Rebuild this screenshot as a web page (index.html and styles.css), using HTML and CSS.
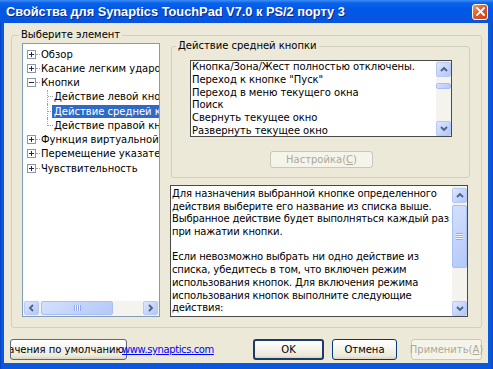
FILE: index.html
```html
<!DOCTYPE html>
<html lang="ru">
<head>
<meta charset="utf-8">
<link rel="stylesheet" href="styles.css">
</head>
<body>
<div class="window">
  <div class="titlebar">
    <span class="title">Свойства для Synaptics TouchPad V7.0 к PS/2 порту 3</span>
    <div class="close">
      <svg width="9" height="9" viewBox="0 0 9 9"><path d="M1 1L8 8M8 1L1 8" stroke="#fff" stroke-width="1.8" stroke-linecap="square"/></svg>
    </div>
  </div>
  <div class="body">
    <div class="group outer">
      <div class="legend">Выберите элемент</div>
      <div class="outer-content">
        <div class="tree">
          <div class="tree-items">
            <div class="row root"><svg class="exp" width="9" height="9" viewBox="0 0 9 9"><rect x=".5" y=".5" width="8" height="8" fill="#fff" stroke="#8c97a5"/><path d="M2 4.5h5M4.5 2v5" stroke="#1b2a4a"/></svg><span class="stub"></span><span class="label">Обзор</span></div>
            <div class="row root"><svg class="exp" width="9" height="9" viewBox="0 0 9 9"><rect x=".5" y=".5" width="8" height="8" fill="#fff" stroke="#8c97a5"/><path d="M2 4.5h5M4.5 2v5" stroke="#1b2a4a"/></svg><span class="stub"></span><span class="label">Касание легким ударом</span></div>
            <div class="row root"><svg class="exp" width="9" height="9" viewBox="0 0 9 9"><rect x=".5" y=".5" width="8" height="8" fill="#fff" stroke="#8c97a5"/><path d="M2 4.5h5" stroke="#1b2a4a"/></svg><span class="stub"></span><span class="label">Кнопки</span></div>
            <div class="row child"><span class="branch"></span><span class="label">Действие левой кнопки</span></div>
            <div class="row child"><span class="branch"></span><span class="label selected">Действие средней кнопки</span></div>
            <div class="row child"><span class="branch last"></span><span class="label">Действие правой кнопки</span></div>
            <div class="row root"><svg class="exp" width="9" height="9" viewBox="0 0 9 9"><rect x=".5" y=".5" width="8" height="8" fill="#fff" stroke="#8c97a5"/><path d="M2 4.5h5M4.5 2v5" stroke="#1b2a4a"/></svg><span class="stub"></span><span class="label">Функция виртуальной прокрутки</span></div>
            <div class="row root"><svg class="exp" width="9" height="9" viewBox="0 0 9 9"><rect x=".5" y=".5" width="8" height="8" fill="#fff" stroke="#8c97a5"/><path d="M2 4.5h5M4.5 2v5" stroke="#1b2a4a"/></svg><span class="stub"></span><span class="label">Перемещение указателя</span></div>
            <div class="row root"><svg class="exp" width="9" height="9" viewBox="0 0 9 9"><rect x=".5" y=".5" width="8" height="8" fill="#fff" stroke="#8c97a5"/><path d="M2 4.5h5M4.5 2v5" stroke="#1b2a4a"/></svg><span class="stub"></span><span class="label">Чувствительность</span></div>
          </div>
          <div class="hscroll">
            <div class="sb-btn h"><svg width="7" height="8" viewBox="0 0 7 8"><path d="M5 1L2 4L5 7" fill="none" stroke="#4d6185" stroke-width="1.8"/></svg></div>
            <div class="sb-thumb h"><span class="grip-h"></span></div>
            <div class="sb-track"></div>
            <div class="sb-btn h"><svg width="7" height="8" viewBox="0 0 7 8"><path d="M2 1L5 4L2 7" fill="none" stroke="#4d6185" stroke-width="1.8"/></svg></div>
          </div>
        </div>
        <div class="right">
          <div class="group inner">
            <div class="legend">Действие средней кнопки</div>
            <div class="listbox">
              <div class="list-items">
                <div class="item">Кнопка/Зона/Жест полностью отключены.</div>
                <div class="item">Переход к кнопке "Пуск"</div>
                <div class="item">Переход в меню текущего окна</div>
                <div class="item">Поиск</div>
                <div class="item">Свернуть текущее окно</div>
                <div class="item">Развернуть текущее окно</div>
              </div>
              <div class="vscroll list-sb">
                <div class="sb-btn v"><svg width="8" height="7" viewBox="0 0 8 7"><path d="M1 5L4 2L7 5" fill="none" stroke="#4d6185" stroke-width="1.8"/></svg></div>
                <div class="gap6"></div>
                <div class="sb-thumb v small"></div>
                <div class="sb-track"></div>
                <div class="sb-btn v"><svg width="8" height="7" viewBox="0 0 8 7"><path d="M1 2L4 5L7 2" fill="none" stroke="#4d6185" stroke-width="1.8"/></svg></div>
              </div>
            </div>
            <div class="btn disabled setup">Настройка(<u>С</u>)</div>
          </div>
          <div class="textbox">
            <div class="text">
              <div>Для назначения выбранной кнопке определенного</div>
              <div>действия выберите его название из списка выше.</div>
              <div>Выбранное действие будет выполняться каждый раз</div>
              <div>при нажатии кнопки.</div>
              <div>&nbsp;</div>
              <div>Если невозможно выбрать ни одно действие из</div>
              <div>списка, убедитесь в том, что включен режим</div>
              <div>использования кнопок. Для включения режима</div>
              <div>использования кнопок выполните следующие</div>
              <div>действия:</div>
            </div>
            <div class="vscroll text-sb">
              <div class="sb-btn v"><svg width="8" height="7" viewBox="0 0 8 7"><path d="M1 5L4 2L7 5" fill="none" stroke="#4d6185" stroke-width="1.8"/></svg></div>
              <div class="sb-thumb v big"><span class="grip-v"></span></div>
              <div class="sb-track"></div>
              <div class="sb-btn v"><svg width="8" height="7" viewBox="0 0 8 7"><path d="M1 2L4 5L7 2" fill="none" stroke="#4d6185" stroke-width="1.8"/></svg></div>
            </div>
          </div>
        </div>
      </div>
    </div>
    <div class="bottom">
      <div class="btn defaults"><span>Значения по умолчанию</span></div>
      <span class="link">www.synaptics.com</span>
      <div class="btn ok">OK</div>
      <div class="btn cancel">Отмена</div>
      <div class="btn disabled apply">Применить(<u>А</u>)</div>
    </div>
  </div>
</div>
</body>
</html>
```
FILE: styles.css
```css
* { box-sizing: border-box; }
html, body { margin: 0; padding: 0; }
body {
  width: 493px;
  height: 369px;
  overflow: hidden;
  font-family: "DejaVu Sans", sans-serif;
  font-size: 10px;
  color: #000;
  background: #0a55dc;
}
.window {
  width: 493px;
  height: 369px;
  display: flex;
  flex-direction: column;
  background: linear-gradient(90deg, #0842c4 0, #0a58e0 2px, #0a58e0 491px, #0842c4 493px);
}
.titlebar {
  height: 23px;
  flex: none;
  display: flex;
  align-items: center;
  padding: 0 5px 0 6px;
  background: linear-gradient(#3d8ef7 0, #0a62ea 3px, #0058e6 9px, #0556e2 17px, #0a55da 23px);
}
.title {
  flex: 1;
  color: #fff;
  font-family: "Liberation Sans", sans-serif;
  font-weight: bold;
  font-size: 12.8px;
  white-space: nowrap;
  text-shadow: 1px 1px 0 #0a2a8a;
}
.close {
  width: 16px;
  height: 16px;
  border: 1px solid #fff;
  border-radius: 3px;
  background: linear-gradient(135deg, #f09a72 0, #e25a2a 45%, #c8401a 100%);
  display: flex;
  align-items: center;
  justify-content: center;
}
.body {
  flex: 1;
  margin: 0 5px 6px 4px;
  background: #ece9d8;
  display: flex;
  flex-direction: column;
}
.group {
  border: 1px solid #d0d0bf;
  border-radius: 3px;
}
.legend {
  width: fit-content;
  line-height: 12px;
  height: 12px;
  padding: 0 2px;
  background: #ece9d8;
  white-space: nowrap;
  margin-top: -7px;
}
.outer {
  margin: 12px 6px 0 7px;
  padding: 0 11px 10px 10px;
}
.outer > .legend { margin-left: -3px; }
.outer-content {
  display: flex;
  gap: 10px;
  margin-top: 2px;
}
.tree {
  width: 138px;
  height: 274px;
  border: 1px solid #7f9db9;
  background: #fff;
  display: flex;
  flex-direction: column;
}
.tree-items {
  flex: 1;
  overflow: hidden;
  padding-top: 3px;
}
.row {
  height: 14.25px;
  display: flex;
  align-items: center;
  white-space: nowrap;
}
.exp { margin-left: 4px; flex: none; }
.stub {
  width: 4px;
  border-top: 1px dotted #a0a0a0;
  flex: none;
}
.root .label { margin-left: 1px; }
.branch {
  align-self: stretch;
  width: 6px;
  margin-left: 24px;
  border-left: 1px dotted #a0a0a0;
  display: flex;
  align-items: center;
  flex: none;
}
.branch::after {
  content: "";
  width: 5px;
  border-top: 1px dotted #a0a0a0;
}
.branch.last {
  align-self: flex-start;
  height: 8px;
  align-items: flex-end;
}
.child .label { margin-left: 1px; }
.child .label.selected {
  margin-left: -1px;
  padding: 0 2px;
  background: #316ac5;
  color: #fff;
  line-height: 13px;
}
.hscroll {
  height: 15px;
  flex: none;
  display: flex;
  padding: 0 1px 1px 1px;
  background: #f4f3ee;
}
.sb-btn {
  flex: none;
  border: 1px solid #b7c9f4;
  border-radius: 2px;
  background: linear-gradient(135deg, #dde8fe 0, #c6d6fb 50%, #b4c8f6 100%);
  display: flex;
  align-items: center;
  justify-content: center;
}
.sb-btn.h { width: 15px; height: 14px; }
.sb-btn.v { width: 15px; height: 15px; }
.sb-track { flex: 1; background: #f4f3ee; }
.sb-thumb {
  flex: none;
  border: 1px solid #a9bff3;
  border-radius: 2px;
  background: linear-gradient(135deg, #d3e0fd 0, #c3d4fb 50%, #b4c9f7 100%);
  display: flex;
  align-items: center;
  justify-content: center;
}
.sb-thumb.h { width: 72px; margin-left: 2px; }
.grip-h {
  width: 7px;
  height: 6px;
  background: repeating-linear-gradient(90deg, #8faaf0 0 1px, #eef3ff 1px 2px);
}
.grip-v {
  width: 7px;
  height: 7px;
  background: repeating-linear-gradient(180deg, #8faaf0 0 1px, #eef3ff 1px 2px);
}
.right {
  width: 300px;
  display: flex;
  flex-direction: column;
}
.inner {
  margin: 3px 0 0 1px;
  padding: 0 0 9px 0;
}
.inner > .legend { margin-left: 4px; }
.listbox {
  width: 262px;
  height: 77px;
  margin: 8px 0 0 18px;
  border: 1px solid #4a4a4a;
  background: #fff;
  display: flex;
}
.list-items {
  flex: 1;
  padding-left: 1px;
  overflow: hidden;
  letter-spacing: -0.05px;
}
.item {
  height: 12.8px;
  line-height: 12.8px;
  white-space: nowrap;
}
.vscroll {
  width: 15px;
  flex: none;
  display: flex;
  flex-direction: column;
  background: #f4f3ee;
}
.list-sb { padding: 1px 0 0 0; }
.gap6 { height: 6px; flex: none; }
.sb-thumb.small { height: 6px; }
.text-sb { padding: 2px 0 0 0; }
.sb-thumb.big { height: 63px; margin-top: 2px; }
.btn {
  height: 21px;
  border: 1px solid #003c74;
  border-radius: 3px;
  background: linear-gradient(#ffffff 0, #f6f5ef 40%, #ece9d8 85%, #d8d2c2 100%);
  display: flex;
  align-items: center;
  justify-content: center;
  white-space: nowrap;
  flex: none;
}
.btn.disabled {
  border-color: #c9c7ba;
  background: #f5f4ea;
  color: #aca899;
}
.setup {
  width: 103px;
  height: 17px;
  margin: 14px 0 0 98px;
}
.textbox {
  width: 298px;
  height: 132px;
  margin-top: 7px;
  border: 1px solid #4a4a4a;
  background: #fff;
  display: flex;
}
.text {
  flex: 1;
  padding: 2px 0 0 1px;
  overflow: hidden;
  letter-spacing: -0.15px;
}
.text div {
  height: 12.7px;
  line-height: 12.7px;
  white-space: nowrap;
}
.bottom {
  display: flex;
  align-items: center;
  margin-top: 11px;
  padding: 0 6px;
}
.defaults {
  width: 117px;
  justify-content: flex-end;
  overflow: hidden;
  padding-right: 2px;
  border-color: #5a6a7a;
}
.link {
  margin-left: -5px;
  color: #0000ff;
  text-decoration: underline;
  white-space: nowrap;
  letter-spacing: -0.4px;
}
.ok {
  width: 71px;
  margin-left: auto;
  border-width: 2px;
  border-color: #1c3b6c;
}
.cancel { width: 65px; margin-left: 8px; }
.apply { width: 71px; margin-left: 14px; }
```
